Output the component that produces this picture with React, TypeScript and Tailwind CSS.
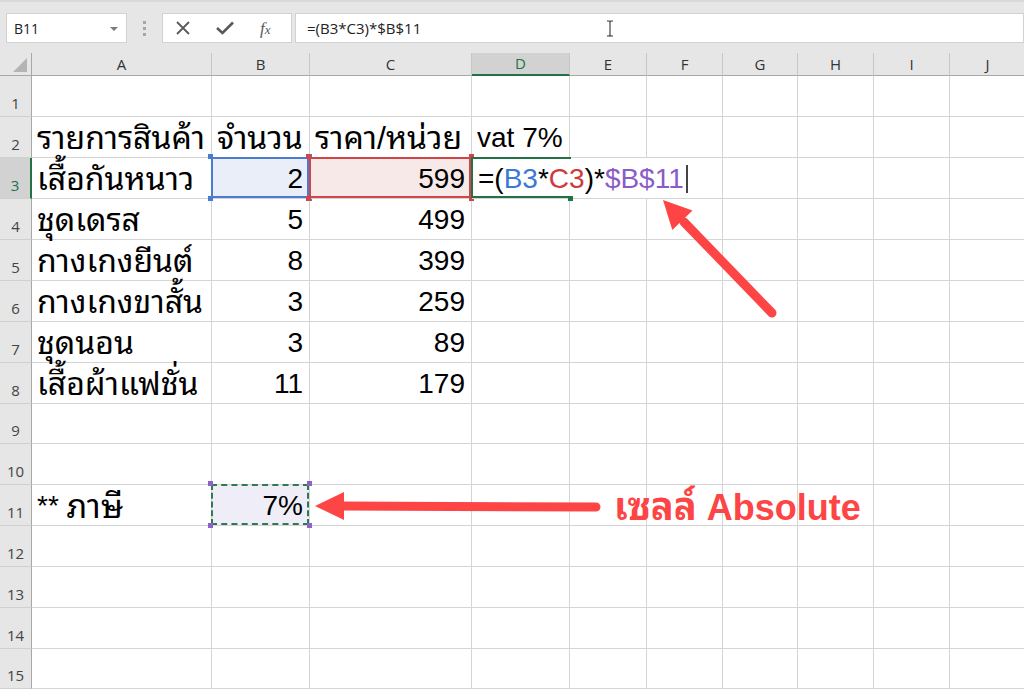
import React from "react";

const GRID =
  "grid grid-cols-[32px_180px_98px_162px_98px_77px_76px_75px_76px_76px_76px]";
const CELL_FONT =
  "[font-family:'Liberation_Sans','Noto_Sans_Thai_Looped','Noto_Sans_Thai','Leelawadee_UI',Tahoma,'Noto_Sans',sans-serif]";
const UI_FONT = "[font-family:'Open_Sans','Noto_Sans',sans-serif]";

const letters = ["A", "B", "C", "D", "E", "F", "G", "H", "I", "J"];
const rowHeights = [
  "h-[41px]", "h-[41px]", "h-[41px]", "h-[41px]", "h-[41px]",
  "h-[41px]", "h-[41px]", "h-[41px]", "h-[40px]", "h-[41px]",
  "h-[41px]", "h-[41px]", "h-[41px]", "h-[41px]", "h-[40px]",
];

type Cell = { t?: string; right?: boolean; thai?: boolean };
const data: Record<number, Cell[]> = {
  2: [{ t: "รายการสินค้า", thai: true }, { t: "จำนวน", thai: true }, { t: "ราคา/หน่วย", thai: true }, { t: "vat 7%" }],
  4: [{ t: "ชุดเดรส", thai: true }, { t: "5", right: true }, { t: "499", right: true }],
  5: [{ t: "กางเกงยีนต์", thai: true }, { t: "8", right: true }, { t: "399", right: true }],
  6: [{ t: "กางเกงขาสั้น", thai: true }, { t: "3", right: true }, { t: "259", right: true }],
  7: [{ t: "ชุดนอน", thai: true }, { t: "3", right: true }, { t: "89", right: true }],
  8: [{ t: "เสื้อผ้าแฟชั่น", thai: true }, { t: "11", right: true }, { t: "179", right: true }],
};

function Handle({ pos, color }: { pos: string; color: string }) {
  return <div className={`absolute w-[5px] h-[5px] ${pos} ${color}`} />;
}

function Corners({ color }: { color: string }) {
  return (
    <>
      <Handle pos="-left-[3px] -top-[3px]" color={color} />
      <Handle pos="-right-[3px] -top-[3px]" color={color} />
      <Handle pos="-left-[3px] -bottom-[3px]" color={color} />
      <Handle pos="-right-[3px] -bottom-[3px]" color={color} />
    </>
  );
}

function RowHeader({ n, active }: { n: number; active?: boolean }) {
  return (
    <div
      className={`flex items-end justify-center pb-[5px] text-[15px] leading-none border-b border-[#d0d0d0] ${UI_FONT} ${
        active
          ? "bg-[#d2d2d2] text-[#217346] border-r-2 border-r-[#217346]"
          : "bg-[#e6e6e6] text-[#444] border-r border-r-[#a8a8a8]"
      }`}
    >
      {n}
    </div>
  );
}

function TextCell({ c }: { c?: Cell }) {
  return (
    <div
      className={`flex items-center border-r border-b border-[#d4d4d4] overflow-visible whitespace-nowrap leading-none text-black ${CELL_FONT} ${
        c?.thai ? "text-[32px] pt-[1px]" : "text-[28px] pt-[2px]"
      } ${c?.right ? "justify-end pr-[6px]" : "pl-[5px]"}`}
    >
      {c?.t}
    </div>
  );
}

function Row3() {
  return (
    <>
      <TextCell c={{ t: "เสื้อกันหนาว", thai: true }} />
      <div className="relative flex items-center justify-end pr-[6px] pt-[2px] border-r border-b border-[#d4d4d4] bg-[#e9eef8]">
        <div className="absolute -left-[1px] -top-[1px] right-0 bottom-0 border-2 border-[#4a7bd0]" />
        <div className="absolute -left-[1px] -top-[1px] right-0 bottom-0">
          <Corners color="bg-[#4a7bd0]" />
        </div>
        <span className={`relative text-[28px] leading-none text-black ${CELL_FONT}`}>2</span>
      </div>
      <div className="relative flex items-center justify-end pr-[6px] pt-[2px] border-r border-b border-[#d4d4d4] bg-[#f8e9e9]">
        <div className="absolute -left-[1px] -top-[1px] right-0 bottom-0 border-2 border-[#d0454a]" />
        <div className="absolute -left-[1px] -top-[1px] right-0 bottom-0">
          <Corners color="bg-[#d0454a]" />
        </div>
        <span className={`relative text-[28px] leading-none text-black ${CELL_FONT}`}>599</span>
      </div>
      <div className="relative col-span-3 flex items-center pl-[6px] pt-[2px] border-r border-b border-[#d4d4d4] bg-white">
        <div className="absolute -left-[1px] -top-[1px] w-[100px] bottom-0 border-t-2 border-b-2 border-l-2 border-[#217346]" />
        <div className="absolute left-[96px] -bottom-[3px] w-[5px] h-[5px] bg-[#217346]" />
        <span className={`relative whitespace-nowrap text-[28px] leading-none text-black ${CELL_FONT}`}>
          =(<span className="text-[#3c78d8]">B3</span>*
          <span className="text-[#d0393e]">C3</span>)*
          <span className="text-[#8a5cc8]">$B$11</span>
        </span>
        <div className="ml-[2px] w-[2px] h-[28px] bg-[#444]" />
      </div>
      {[0, 1, 2, 3].map((i) => (
        <TextCell key={i} />
      ))}
    </>
  );
}

function Row11() {
  return (
    <>
      <div className={`flex items-center pl-[5px] pt-[2px] border-r border-b border-[#d4d4d4] whitespace-nowrap leading-none text-black text-[28px] ${CELL_FONT}`}>
        **&nbsp;<span className="text-[33px]">ภาษี</span>
      </div>
      <div className="relative flex items-center justify-end pr-[6px] pt-[2px] border-r border-b border-[#d4d4d4] bg-[#efedf8]">
        <div className="absolute -left-[1px] -top-[1px] right-0 bottom-0 border-2 border-dashed border-[#2f7a4e]" />
        <div className="absolute -left-[1px] -top-[1px] right-0 bottom-0">
          <Corners color="bg-[#8c63c8]" />
        </div>
        <span className={`relative text-[28px] leading-none text-black ${CELL_FONT}`}>7%</span>
      </div>
      {[0, 1, 2, 3, 4, 5, 6, 7].map((i) => (
        <TextCell key={i} />
      ))}
    </>
  );
}

export default function App() {
  return (
    <div className="relative w-[1024px] h-[691px] overflow-hidden bg-white">
      {/* Formula bar */}
      <div className="h-[53px] bg-[#e6e6e6] border-t-2 border-[#d9d9d9] flex items-start pt-[11px] pl-[6px]">
        <div className={`relative w-[121px] h-[30px] bg-white border border-[#d2d2d2] flex items-center pl-[7px] text-[14px] text-[#222] ${UI_FONT}`}>
          B11
          <svg className="absolute right-[8px] top-[13px]" width="8" height="4" viewBox="0 0 8 4">
            <path d="M0 0 L8 0 L4 4 Z" fill="#7a7a7a" />
          </svg>
        </div>
        <div className="ml-[16px] mt-[8px] flex flex-col gap-[3px]">
          <div className="w-[3px] h-[3px] bg-[#a6a6a6]" />
          <div className="w-[3px] h-[3px] bg-[#a6a6a6]" />
          <div className="w-[3px] h-[3px] bg-[#a6a6a6]" />
        </div>
        <div className="ml-[16px] w-[130px] h-[30px] bg-white border border-[#d2d2d2] flex items-center">
          <svg className="ml-[13px]" width="14" height="14" viewBox="0 0 14 14">
            <path d="M1 1 L13 13 M13 1 L1 13" stroke="#5a5a5a" strokeWidth="1.8" />
          </svg>
          <svg className="ml-[26px]" width="18" height="14" viewBox="0 0 18 14">
            <path d="M1 7 L6.5 12 L17 1.5" stroke="#5a5a5a" strokeWidth="2.6" fill="none" />
          </svg>
          <span className="ml-[26px] text-[17px] italic text-[#5a5a5a] [font-family:'Liberation_Serif',serif] leading-none">
            f<span className="text-[13px]">x</span>
          </span>
        </div>
        <div className={`relative ml-[3px] flex-1 h-[30px] bg-white border border-[#d2d2d2] flex items-center pl-[11px] text-[15px] text-[#222] ${UI_FONT}`}>
          =(B3*C3)*$B$11
          <svg className="absolute left-[310px] top-[6px]" width="8" height="17" viewBox="0 0 8 17">
            <path d="M1 1 H3 Q4 1 4 2.5 V14.5 Q4 16 3 16 H1 M7 1 H5 Q4 1 4 2.5 M4 14.5 Q4 16 5 16 H7" stroke="#333" strokeWidth="1.1" fill="none" />
          </svg>
        </div>
      </div>

      {/* Column headers */}
      <div className={`${GRID} h-[23px]`}>
        <div className="relative bg-[#e6e6e6] border-r border-b border-[#a8a8a8]">
          <svg className="absolute right-[4px] bottom-[3px]" width="14" height="14" viewBox="0 0 14 14">
            <path d="M14 0 L14 14 L0 14 Z" fill="#b4b4b4" />
          </svg>
        </div>
        {letters.map((l) => (
          <div
            key={l}
            className={`flex items-center justify-center text-[15px] leading-none border-r border-r-[#c6c6c6] ${UI_FONT} ${
              l === "D"
                ? "bg-[#d2d2d2] text-[#217346] border-b-2 border-b-[#217346]"
                : "bg-[#e6e6e6] text-[#333] border-b border-b-[#a8a8a8]"
            }`}
          >
            {l}
          </div>
        ))}
      </div>

      {/* Rows */}
      {rowHeights.map((h, i) => {
        const n = i + 1;
        const cells = data[n] || [];
        return (
          <div key={n} className={`${GRID} ${h}`}>
            <RowHeader n={n} active={n === 3} />
            {n === 3 ? (
              <Row3 />
            ) : n === 11 ? (
              <Row11 />
            ) : (
              letters.map((l, j) => <TextCell key={l} c={cells[j]} />)
            )}
          </div>
        );
      })}

      {/* Annotations */}
      <svg
        className="absolute left-0 top-0 pointer-events-none"
        width="1024"
        height="691"
        viewBox="0 0 1024 691"
      >
        <line x1="772" y1="313" x2="684" y2="222" stroke="#fd4545" strokeWidth="9" strokeLinecap="round" />
        <path d="M663 200 L692.5 210.5 L672.3 229.9 Z" fill="#fd4545" />
        <line x1="596" y1="507" x2="340" y2="506" stroke="#fd4545" strokeWidth="9" strokeLinecap="round" />
        <path d="M315 506 L344 492 L344 520 Z" fill="#fd4545" />
      </svg>
      <div className="absolute left-[614px] top-[488px] text-[36px] font-bold leading-none text-[#fd4545] whitespace-nowrap [font-family:'Liberation_Sans','Noto_Sans_Thai_Looped','Noto_Sans_Thai',Tahoma,sans-serif]">
        <span className="text-[38px]">เซลล์</span> Absolute
      </div>
    </div>
  );
}
